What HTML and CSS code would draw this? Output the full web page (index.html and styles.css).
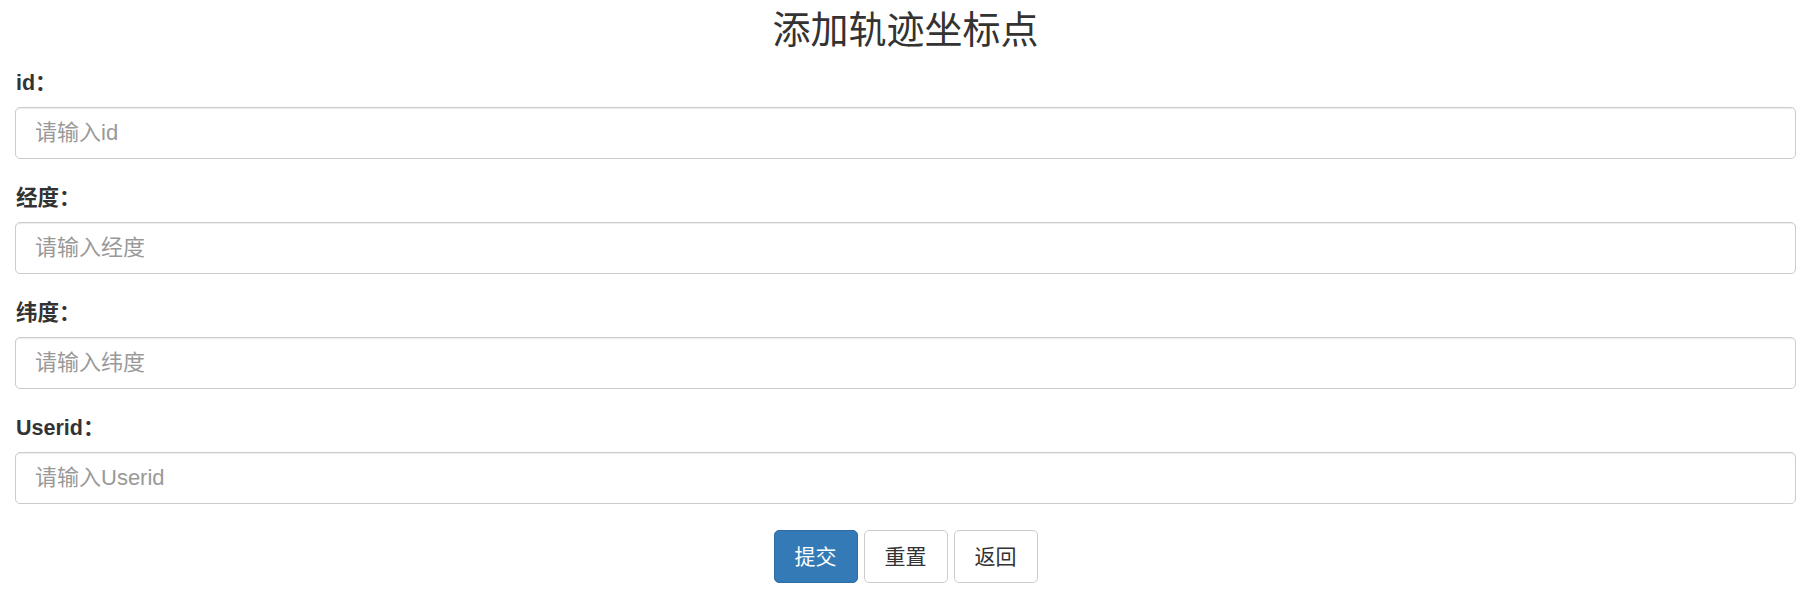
FILE: index.html
```html
<!DOCTYPE html>
<html lang="zh-CN">
<head>
<meta charset="utf-8">
<title>添加轨迹坐标点</title>
<link rel="stylesheet" href="styles.css">
</head>
<body>
<div class="container">
  <h1 class="title">添加轨迹坐标点</h1>
  <form class="form">
    <div class="form-group">
      <label class="label" for="id">id：</label>
      <input class="input" id="id" type="text" placeholder="请输入id">
    </div>
    <div class="form-group">
      <label class="label" for="lng">经度：</label>
      <input class="input" id="lng" type="text" placeholder="请输入经度">
    </div>
    <div class="form-group">
      <label class="label" for="lat">纬度：</label>
      <input class="input" id="lat" type="text" placeholder="请输入纬度">
    </div>
    <div class="form-group">
      <label class="label" for="uid">Userid：</label>
      <input class="input" id="uid" type="text" placeholder="请输入Userid">
    </div>
    <div class="actions">
      <button type="button" class="btn btn-primary">提交</button>
      <button type="button" class="btn btn-default">重置</button>
      <button type="button" class="btn btn-default">返回</button>
    </div>
  </form>
</div>
</body>
</html>
```

FILE: styles.css
```css
* {
  box-sizing: border-box;
}

html, body {
  margin: 0;
  padding: 0;
  background: #fff;
}

body {
  font-family: "Liberation Sans", "Noto Sans CJK SC", sans-serif;
  color: #333;
}

.container {
  padding: 0 8px 0 15px;
}

.title {
  margin: 8px 0 0;
  font-size: 38px;
  line-height: 44px;
  font-weight: 400;
  text-align: center;
  color: #333;
}

.form {
  margin-top: 17px;
  display: flex;
  flex-direction: column;
}

.form-group {
  display: flex;
  flex-direction: column;
  margin-bottom: 25px;
}

.label {
  font-size: 21.5px;
  line-height: 28px;
  font-weight: 700;
  margin-bottom: 10px;
  padding-left: 1px;
  color: #333;
}

.input {
  display: block;
  width: 100%;
  height: 52px;
  padding: 0 19px;
  font-family: "Liberation Sans", "Noto Sans CJK SC", sans-serif;
  font-size: 22px;
  color: #555;
  background: #fff;
  border: 1px solid #ccc;
  border-radius: 5px;
  box-shadow: inset 0 1px 1px rgba(0, 0, 0, 0.075);
  outline: none;
}

.input::placeholder {
  color: #999;
  opacity: 1;
}

.actions {
  display: flex;
  justify-content: center;
  gap: 6px;
  margin-top: 1px;
}

.btn {
  height: 53px;
  padding: 0 20px;
  font-family: "Liberation Sans", "Noto Sans CJK SC", sans-serif;
  font-size: 21px;
  line-height: 1;
  border: 1px solid #ccc;
  border-radius: 5px;
  cursor: pointer;
}

.btn-primary {
  color: #fff;
  background: #337ab7;
  border-color: #2e6da4;
}

.btn-default {
  color: #333;
  background: #fff;
  border-color: #ccc;
}
```
